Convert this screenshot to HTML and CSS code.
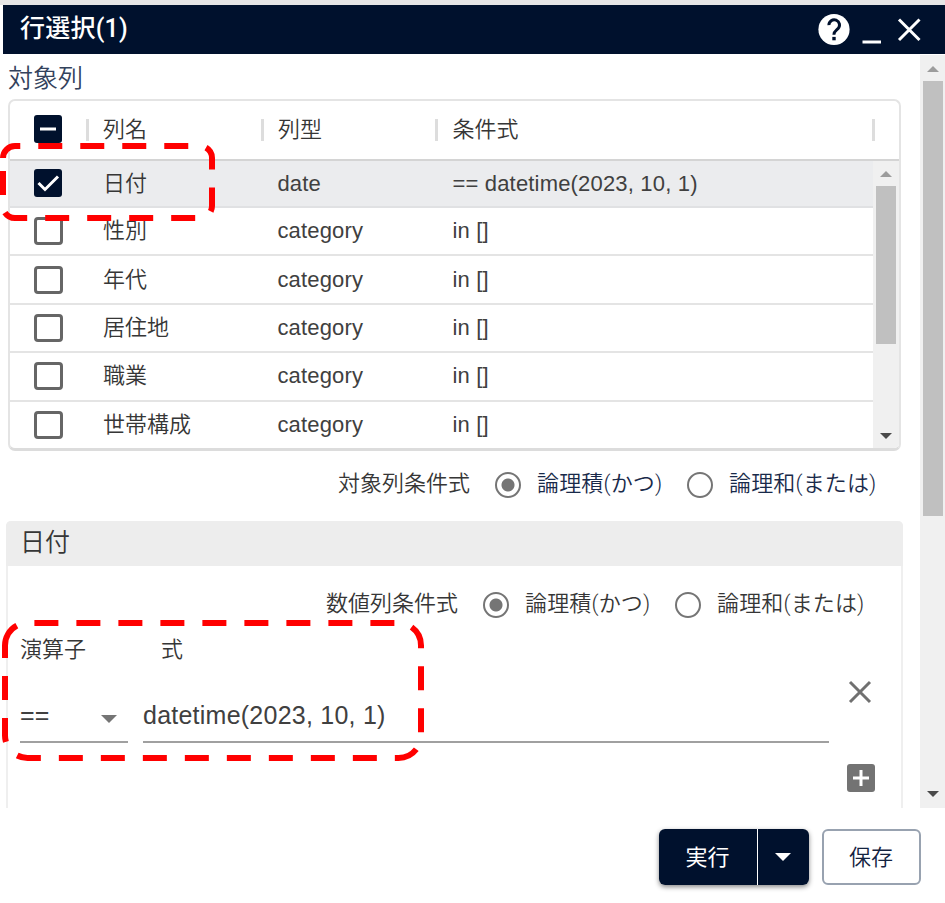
FILE: index.html
```html
<!DOCTYPE html>
<html lang="ja">
<head>
<meta charset="utf-8">
<title>行選択(1)</title>
<link rel="stylesheet" href="styles.css">
</head>
<body>
<div class="dialog">
  <header class="titlebar">
    <h1><span class="t">行選択(1)</span></h1>
    <svg class="tools" width="112" height="50" viewBox="-2 0 112 50">
      <circle cx="14" cy="25.500" r="15.6" fill="#fff"/>
      <path d="M8.9 21.100a5.300 5.300 0 1 1 9.100 3.600c-2.200 2.100-4.100 2.800-4.100 6.100" fill="none" stroke="#00112d" stroke-width="3"/>
      <rect x="12.300" y="32.900" width="3.400" height="3.400" fill="#00112d"/>
      <path d="M42.500 38h18.500M79 15.500l20.500 20.500M99.500 15.500L79 36" fill="none" stroke="#fff" stroke-width="3"/>
    </svg>
  </header>
  <div class="body">
    <main class="content">
      <h2 class="label"><span class="t">対象列</span></h2>
      <section class="table">
        <div class="row head">
          <span class="check"><svg width="28" height="28" viewBox="0 0 28 28"><rect width="28" height="28" rx="3" fill="#00112d"/><path d="M6 14h16" stroke="#fff" stroke-width="3"/></svg></span>
          <span class="cell name"><span class="t">列名</span></span>
          <span class="cell type"><span class="t">列型</span></span>
          <span class="cell cond"><span class="t">条件式</span></span>
          <span class="cell end"></span>
        </div>
        <div class="list">
          <div class="rows">
            <div class="row selected"><span class="check"><svg width="28" height="28" viewBox="0 0 28 28"><rect width="28" height="28" rx="3" fill="#00112d"/><path d="M4.500 14l6.500 6.500L24 7.500" fill="none" stroke="#fff" stroke-width="3"/></svg></span><span class="cell name"><span class="t">日付</span></span><span class="cell type">date</span><span class="cell cond">== datetime(2023, 10, 1)</span></div>
            <div class="row"><span class="check"><i class="box"></i></span><span class="cell name"><span class="t">性別</span></span><span class="cell type">category</span><span class="cell cond">in []</span></div>
            <div class="row"><span class="check"><i class="box"></i></span><span class="cell name"><span class="t">年代</span></span><span class="cell type">category</span><span class="cell cond">in []</span></div>
            <div class="row"><span class="check"><i class="box"></i></span><span class="cell name"><span class="t">居住地</span></span><span class="cell type">category</span><span class="cell cond">in []</span></div>
            <div class="row"><span class="check"><i class="box"></i></span><span class="cell name"><span class="t">職業</span></span><span class="cell type">category</span><span class="cell cond">in []</span></div>
            <div class="row"><span class="check"><i class="box"></i></span><span class="cell name"><span class="t">世帯構成</span></span><span class="cell type">category</span><span class="cell cond">in []</span></div>
          </div>
          <div class="scroll inner"><i class="up"></i><i class="thumb"></i><i class="down"></i></div>
        </div>
      </section>
      <div class="radios outer">
        <span class="caption">対象列条件式</span>
        <i class="radio on"></i><span class="opt first">論理積(かつ)</span>
        <i class="radio"></i><span class="opt">論理和(または)</span>
      </div>
      <section class="panel">
        <h3><span class="t">日付</span></h3>
        <div class="radios">
          <span class="caption">数値列条件式</span>
          <i class="radio on"></i><span class="opt first">論理積(かつ)</span>
          <i class="radio"></i><span class="opt">論理和(または)</span>
        </div>
        <div class="form">
          <div class="field op">
            <span class="flabel">演算子</span>
            <div class="input"><span class="eq">==</span><i class="caret"></i></div>
          </div>
          <div class="field expr">
            <span class="flabel">式</span>
            <div class="input"><span class="val">datetime(2023, 10, 1)</span></div>
          </div>
          <svg class="remove" width="28" height="28" viewBox="0 0 28 28"><path d="M4 4l20 20M24 4L4 24" stroke="#707070" stroke-width="3"/></svg>
        </div>
        <div class="addline"><svg width="28" height="28" viewBox="0 0 28 28"><rect width="28" height="28" rx="3" fill="#737373"/><path d="M6 14h16M14 6v16" stroke="#fff" stroke-width="3"/></svg></div>
      </section>
    </main>
    <div class="scroll main"><i class="up"></i><i class="thumb"></i><i class="down"></i></div>
  </div>
  <footer class="actions">
    <div class="split"><button class="run">実行</button><button class="more"><i class="caret"></i></button></div>
    <button class="save">保存</button>
  </footer>
</div>
<svg class="marks" width="945" height="903" viewBox="0 0 945 903" fill="none" stroke="#f00" stroke-width="6" stroke-dasharray="24 18">
  <path d="M3 158a12 12 0 0 1 12-12H200a12 12 0 0 1 12 12V206a12 12 0 0 1-12 12H15a12 12 0 0 1-12-12Z"/>
  <path d="M5 645.500a22.500 22.500 0 0 1 22.500-22.500H398.500a22.500 22.500 0 0 1 22.500 22.500V735.500a22.500 22.500 0 0 1-22.500 22.500H27.500a22.500 22.500 0 0 1-22.500-22.500Z"/>
</svg>
</body>
</html>
```
FILE: styles.css
```css
* { box-sizing: border-box; }
body {
  margin: 0;
  width: 945px;
  height: 903px;
  overflow: hidden;
  background: #fff;
  color: #363636;
  font: 350 22px/32px Roboto, "Noto Sans CJK JP", sans-serif;
}
h1, h2, h3 { margin: 0; font-weight: 350; }
i { display: block; }
.dialog { border-top: 5px solid #e6e6e6; }
.titlebar {
  display: flex;
  justify-content: space-between;
  height: 49px;
  margin-left: 3px;
  background: #00112d;
  color: #fff;
}
.titlebar h1 { padding-left: 17px; font-size: 25px; font-weight: 500; line-height: 48px; letter-spacing: .24px; }
.tools { margin: -1px 15px 0 0; }
.body { display: flex; height: 754px; padding-top: 1px; overflow: hidden; }
.content { width: 920px; padding-left: 8px; }
.label { height: 44px; color: #33425c; font-size: 25px; line-height: 48px; }
.table {
  width: 893px;
  height: 352px;
  border: 2px solid #e4e4e4;
  border-bottom: 3px solid #dcdcdc;
  border-radius: 7px;
  overflow: hidden;
}
.row { display: flex; align-items: center; height: 48.400px; border-bottom: 2px solid #e4e4e4; }
.row.head { height: 60px; border-color: #d4d4d4; }
.row.selected { height: 47px; background: #ebecee; border-color: #e0e1e3; }
.check { width: 76px; padding-left: 24px; }
.check svg { display: block; }
.head .check, .selected .check { position: relative; top: -1px; }
.box { width: 29px; height: 28px; border: 3px solid #666; border-radius: 4px; }
.cell { padding-left: 17px; white-space: nowrap; font-weight: 400; font-family: "Liberation Sans", "Noto Sans CJK JP", sans-serif; letter-spacing: .18px; color: #404040; }
.cell .t { font-weight: 350; letter-spacing: 0; color: #363636; }
.name, .type { width: 175px; }
.row:not(.head) .type, .cond { position: relative; left: -.6px; }
.cond { width: 436px; }
.head .cell { height: 22px; line-height: 22px; border-left: 3px solid #ddd; padding-left: 14px; }
.list { display: flex; height: 287px; }
.rows { flex: 1; height: 287px; }
.scroll { display: flex; flex-direction: column; align-items: center; background: #f0f0f0; }
.scroll .up, .scroll .down { border: 6px solid transparent; border-top: 0; border-bottom: 6px solid #9c9c9c; }
.scroll .down { margin-top: auto; border-bottom: 0; border-top: 6px solid #4a4a4a; }
.thumb { width: 20px; background: #c0c0c0; }
.inner { width: 26px; padding: 10px 0 9px; }
.inner .thumb { height: 158px; margin-top: 9px; }
.main { width: 25px; height: 753px; padding: 11px 0 11px; }
.main .thumb { height: 435px; margin: 9px 0 0 1px; }
.radios { display: flex; align-items: center; height: 32px; white-space: nowrap; }
.radios.outer { margin: 17px 0 0 330px; }
.outer .opt { color: #192a4a; }
.caption { width: 157px; }
.radio { width: 26px; height: 26px; margin-top: 1px; border: 2px solid #757575; border-radius: 50%; }
.radio.on { background: radial-gradient(circle, #757575 6px, transparent 7px); }
.opt { margin-left: 16px; letter-spacing: .15px; }
.opt.first { width: 150px; }
.panel {
  width: 897px;
  height: 300px;
  margin: 21px 0 0 -2px;
  border: 2px solid #efefef;
  border-top: 0;
  border-radius: 5px 5px 0 0;
}
.panel h3 { height: 45px; margin: 0 -2px; padding-left: 14px; background: #ededed; border-radius: 5px 5px 0 0; font-size: 25px; line-height: 44px; }
.panel .radios { margin: 22px 0 0 318px; }
.form { display: flex; height: 122px; padding-left: 12px; margin-top: 14px; }
.flabel { display: block; height: 32px; }
.expr .flabel { padding-left: 18px; }
.input { display: flex; align-items: center; height: 61px; margin-top: 16px; padding-top: 6px; border-bottom: 2px solid #a0a0a0; }
.op { width: 108px; margin-right: 15px; }
.expr { width: 686px; }
.eq, .val { font: 400 25px/32px "Liberation Sans", sans-serif; letter-spacing: .24px; color: #404040; }
.eq { flex: 1; }
.caret { border: 8px solid transparent; border-top-color: #757575; border-bottom: 0; }
.op .caret { margin: 8px 11px 0 0; }
.remove { margin: 44px 0 0 17px; }
.addline { display: flex; justify-content: flex-end; padding-right: 26px; margin-top: 8px; }
.actions { display: flex; justify-content: flex-end; gap: 13px; padding: 21px 24px 0 0; }
button { height: 56px; padding: 0 1px 4px 0; font: 400 22px/32px "Noto Sans CJK JP", sans-serif; background: #fff; color: #14233f; }
.split { display: flex; gap: 1px; border-radius: 6px; box-shadow: 0 2px 5px #0007; overflow: hidden; background: #fff; }
.split button { border: 0; background: #00112d; color: #fff; }
.run { width: 98px; }
.more { display: flex; align-items: center; justify-content: center; width: 51px; }
.more .caret { margin-top: 4px; border-top-color: #fff; }
.save { width: 99px; border: 2px solid #98a2b0; border-radius: 6px; font-weight: 350; }
.marks { position: absolute; left: 0; top: 0; }
```
